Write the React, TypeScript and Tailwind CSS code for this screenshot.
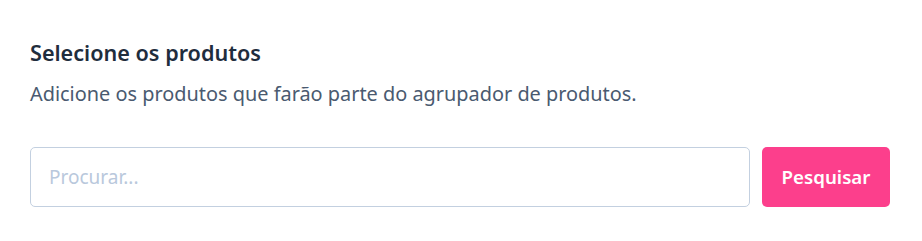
export default function App() {
  return (
    <div className="min-h-[241px] w-full bg-white px-[30px] pt-[38px] font-['Noto_Sans',sans-serif]">
      <h2 className="text-[21.6px] font-semibold leading-[30px] text-[#1f2d3d]">Selecione os produtos</h2>
      <p className="mt-[11px] text-[19.9px] leading-[30px] text-[#4a5a70]">
        Adicione os produtos que farão parte do agrupador de produtos.
      </p>
      <div className="mt-[38px] flex gap-3 pr-[2px]">
        <input
          type="text"
          placeholder="Procurar..."
          className="h-[60px] flex-1 rounded-[5px] border border-[#c3d0e0] px-[18px] text-[19px] text-[#1f2d3d] outline-none placeholder:text-[#b9c8dc]"
        />
        <button className="h-[60px] w-[128px] rounded-[5px] bg-[#fc3f8c] text-[18.7px] font-semibold text-white">
          Pesquisar
        </button>
      </div>
    </div>
  );
}
